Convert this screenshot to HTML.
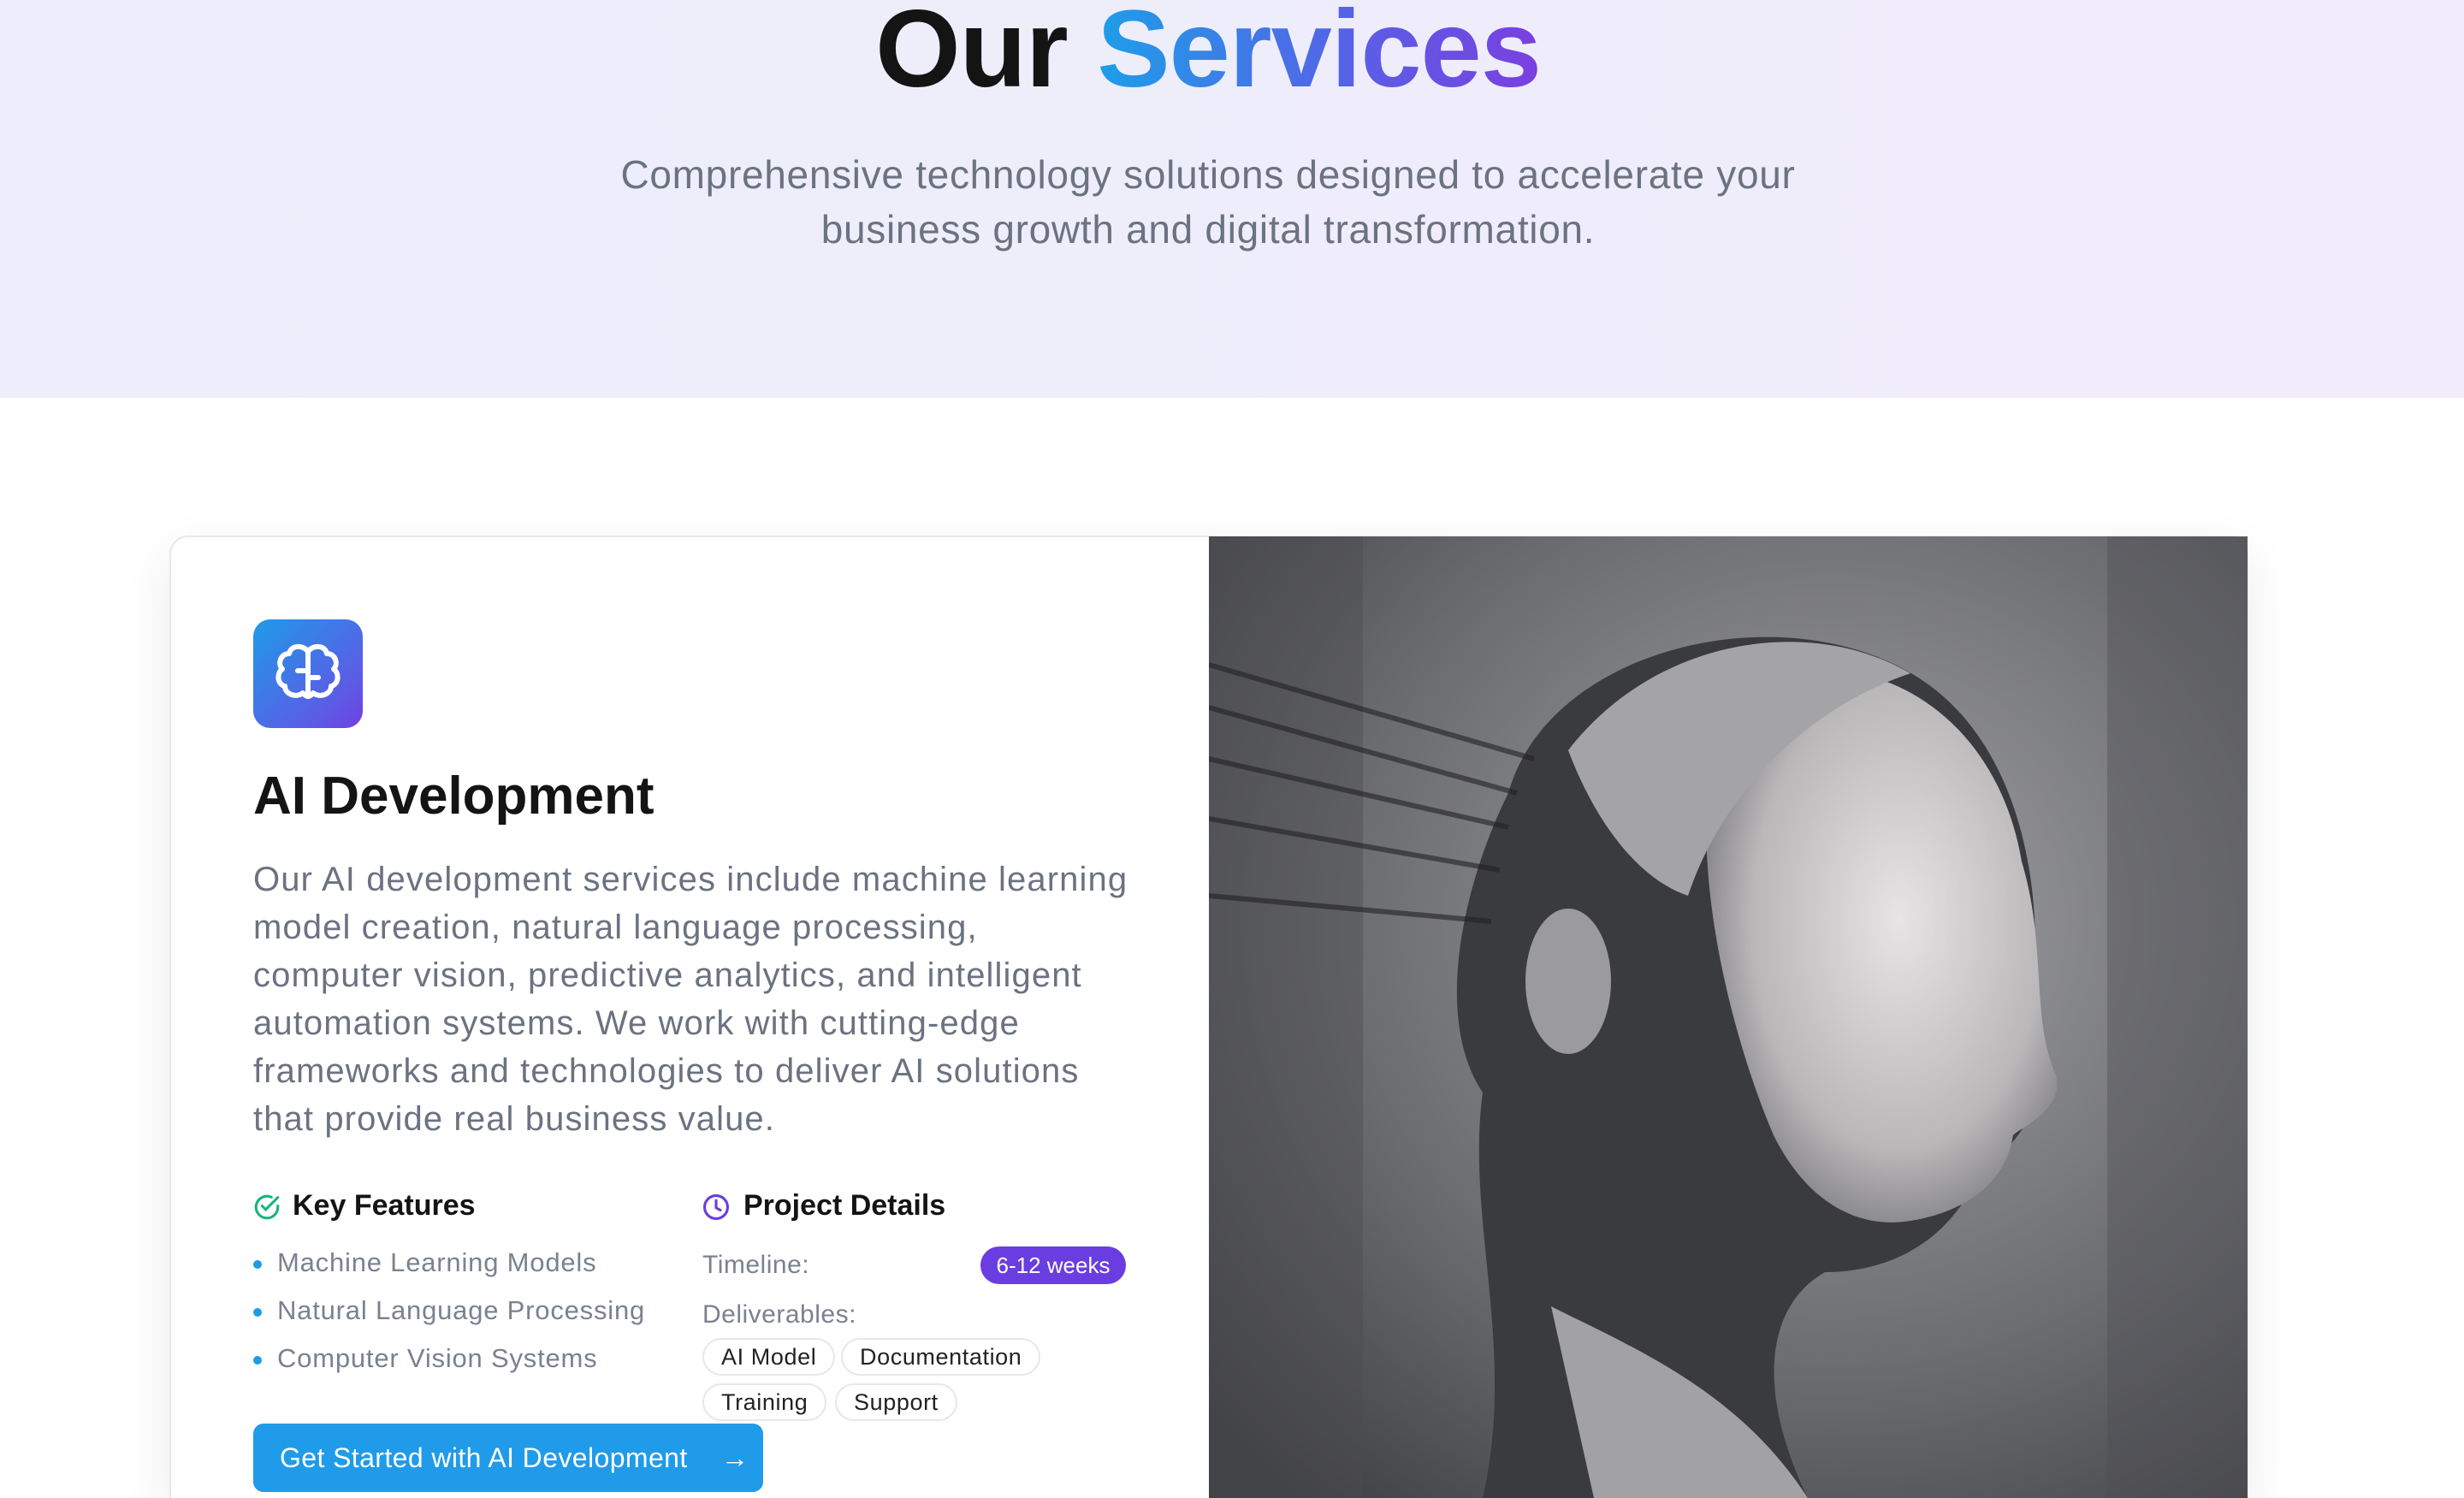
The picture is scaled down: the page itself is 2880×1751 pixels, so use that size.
<!DOCTYPE html>
<html><head><meta charset="utf-8"><style>
*{margin:0;padding:0;box-sizing:border-box}
html,body{width:2880px;height:1751px;overflow:hidden}
body{background:#fff;font-family:"Liberation Sans",sans-serif;position:relative}
.hdr{position:absolute;left:0;top:0;width:2880px;height:465px;background:linear-gradient(90deg,#eceffb,#efedfb 60%,#f1ecfb)}
.title{position:absolute;top:-16px;left:-28px;width:2880px;text-align:center;font-size:128px;font-weight:700;color:#141414;letter-spacing:-1px}
.title span{background:linear-gradient(90deg,#1d9ee8,#5a5ee6 60%,#7b3fe0);-webkit-background-clip:text;color:transparent}
.sub{position:absolute;top:172px;left:-28px;width:2880px;text-align:center;font-size:46px;line-height:64px;color:#6b7280;letter-spacing:.7px}
.card{position:absolute;left:198px;top:626px;width:2430px;height:1125px;background:#fff;border:2px solid #e8e8ec;border-bottom:none;border-radius:22px 22px 0 0;box-shadow:0 20px 60px rgba(0,0,0,.08);overflow:hidden}
.icon{position:absolute;left:296px;top:724px;width:128px;height:127px;border-radius:20px;background:linear-gradient(135deg,#1e9be8,#5d5be6 75%,#7040e0)}
h2{position:absolute;left:296px;top:895px;font-size:62px;font-weight:700;color:#141414}
.p{position:absolute;left:296px;top:1000px;white-space:nowrap;font-size:40px;line-height:56px;color:#6b7280;letter-spacing:1.1px}
.h3{position:absolute;font-size:34px;font-weight:700;color:#141414}
.li{position:absolute;left:296px;font-size:31px;color:#7b8190;letter-spacing:.8px}
.li:before{content:"";display:inline-block;width:10px;height:10px;border-radius:50%;background:#1e9be8;margin-right:18px;vertical-align:middle}
.lbl{position:absolute;left:821px;font-size:30px;color:#7b8190;letter-spacing:.5px}
.badge{position:absolute;left:1146px;top:1457px;width:170px;height:44px;border-radius:22px;background:#6a3de0;color:#fff;font-size:26px;text-align:center;line-height:44px}
.tag{position:absolute;height:44px;border:2px solid #e5e7eb;border-radius:22px;font-size:27px;line-height:40px;padding:0 20px;color:#222;letter-spacing:.6px}
.btn{position:absolute;left:296px;top:1664px;width:596px;height:80px;border-radius:12px;background:#1f9be9;color:#fff;font-size:32px;line-height:80px;padding-left:31px;letter-spacing:.4px}
</style></head><body>
<div class="hdr"></div>
<div class="title">Our <span>Services</span></div>
<div class="sub">Comprehensive technology solutions designed to accelerate your<br>business growth and digital transformation.</div>
<div class="card"></div>
<svg style="position:absolute;left:1413px;top:627px" width="1214" height="1124" viewBox="0 0 1214 1124">
<defs>
<radialGradient id="bg" cx="0.6" cy="0.4" r="0.8"><stop offset="0" stop-color="#a3a3a5"/><stop offset="0.6" stop-color="#6a6b6f"/><stop offset="1" stop-color="#3d3e42"/></radialGradient>
<radialGradient id="face" cx="0.55" cy="0.45" r="0.6"><stop offset="0" stop-color="#e6e4e4"/><stop offset="0.7" stop-color="#b9b7b8"/><stop offset="1" stop-color="#7d7c80"/></radialGradient>
</defs>
<rect width="1214" height="1124" fill="url(#bg)"/>
<rect x="0" y="0" width="180" height="1124" fill="#4a4b4f" opacity=".4"/>
<rect x="1050" y="0" width="164" height="1124" fill="#4d4e52" opacity=".4"/>
<path d="M350 300 C400 120 700 60 850 180 C950 260 980 420 960 560 C1000 650 940 720 900 740 C880 800 820 860 720 860 C650 900 640 1000 700 1124 L320 1124 C360 950 300 800 320 650 C260 560 300 400 350 300Z" fill="#3a3b3f"/>
<path d="M620 180 C760 110 920 200 950 380 C980 480 960 560 990 630 C1000 670 950 690 940 700 C930 760 880 790 820 800 C760 810 700 780 660 700 C600 560 540 300 620 180Z" fill="url(#face)"/>
<path d="M420 250 C520 120 700 90 820 160 C700 200 600 300 560 420 C500 400 450 330 420 250Z" fill="#a4a3a6"/>
<ellipse cx="420" cy="520" rx="50" ry="85" fill="#9b9a9d"/>
<path d="M0 150 L380 260 M0 200 L360 300 M0 260 L350 340 M0 330 L340 390 M0 420 L330 450" stroke="#222" stroke-width="6" opacity=".6"/>
<path d="M400 900 C500 950 620 1000 700 1124 L450 1124Z" fill="#cfcdcf" opacity=".7"/>
</svg>
<div class="icon"><svg width="128" height="127" viewBox="0 0 128 127"><g fill="none" stroke="#fff" stroke-width="6" stroke-linejoin="round" stroke-linecap="round"><path d="M64 38v52M64 38c-4-8-20-9-22 2-10 0-14 12-8 18-7 5-6 18 3 20 0 10 14 14 21 8 3 4 6 4 6 4"/><path d="M64 38c4-8 20-9 22 2 10 0 14 12 8 18 7 5 6 18-3 20 0 10-14 14-21 8-3 4-6 4-6 4"/><path d="M52 60h12M64 68h12"/></g></svg></div>
<h2>AI Development</h2>
<div class="p">Our AI development services include machine learning<br>model creation, natural language processing,<br>computer vision, predictive analytics, and intelligent<br>automation systems. We work with cutting-edge<br>frameworks and technologies to deliver AI solutions<br>that provide real business value.</div>
<svg style="position:absolute;left:295px;top:1394px" width="34" height="34" viewBox="0 0 24 24" fill="none" stroke="#16b57a" stroke-width="2.2" stroke-linecap="round"><path d="M21 11v1a9 9 0 1 1-5.3-8.2"/><path d="M8 11l3 3 10-10"/></svg>
<div class="h3" style="left:342px;top:1390px">Key Features</div>
<div class="li" style="top:1458px">Machine Learning Models</div>
<div class="li" style="top:1514px">Natural Language Processing</div>
<div class="li" style="top:1570px">Computer Vision Systems</div>
<svg style="position:absolute;left:820px;top:1394px" width="34" height="34" viewBox="0 0 24 24" fill="none" stroke="#6a3de0" stroke-width="2.2" stroke-linecap="round"><circle cx="12" cy="12" r="9.5"/><path d="M12 6.5v6l3.5 2"/></svg>
<div class="h3" style="left:869px;top:1390px">Project Details</div>
<div class="lbl" style="top:1462px">Timeline:</div>
<div class="badge">6-12 weeks</div>
<div class="lbl" style="top:1520px">Deliverables:</div>
<div class="tag" style="left:821px;top:1564px">AI Model</div>
<div class="tag" style="left:983px;top:1564px">Documentation</div>
<div class="tag" style="left:821px;top:1617px">Training</div>
<div class="tag" style="left:976px;top:1617px">Support</div>
<div class="btn">Get Started with AI Development <span style="margin-left:30px">→</span></div>
</body></html>
